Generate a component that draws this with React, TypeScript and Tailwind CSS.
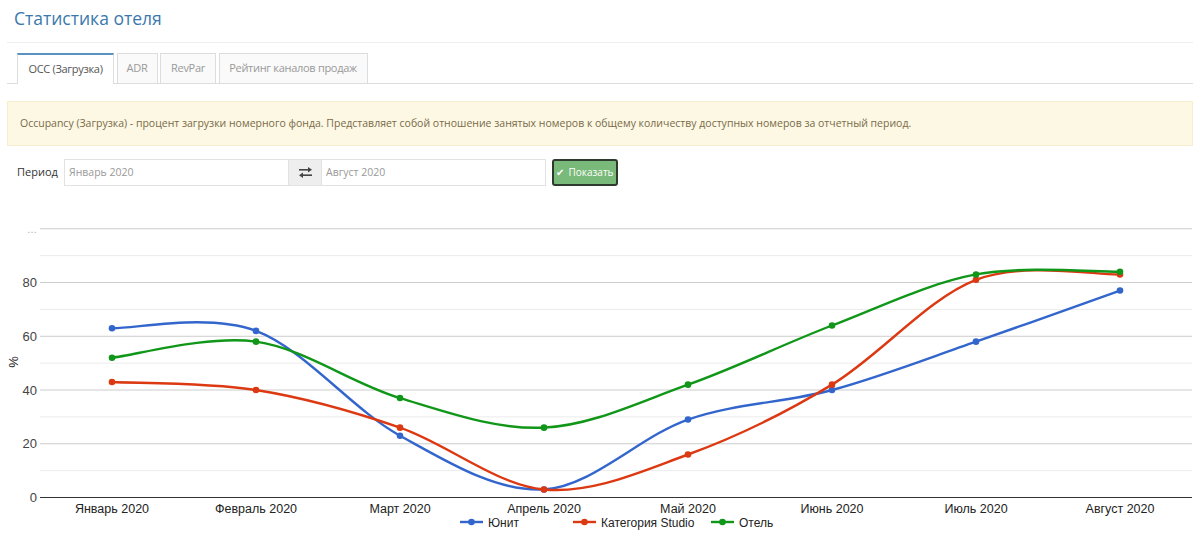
import React from "react";

const MONTHS = [
  "Январь 2020",
  "Февраль 2020",
  "Март 2020",
  "Апрель 2020",
  "Май 2020",
  "Июнь 2020",
  "Июль 2020",
  "Август 2020",
];

const SERIES = [
  { name: "Юнит", color: "#3366cc", data: [63, 62, 23, 3, 29, 40, 58, 77] },
  { name: "Категория Studio", color: "#dc3912", data: [43, 40, 26, 3, 16, 42, 81, 83] },
  { name: "Отель", color: "#109618", data: [52, 58, 37, 26, 42, 64, 83, 84] },
];

const X0 = 40;
const X1 = 1192;
const STEP = 144;
const Y_ZERO = 498.5;
const PX_PER = 2.6875;

const px = (i: number) => X0 + STEP / 2 + i * STEP;
const py = (v: number) => Y_ZERO - v * PX_PER;

// Catmull-Rom -> cubic bezier, same look as google "function" curves
function smoothPath(values: number[]) {
  const pts = values.map((v, i) => [px(i), py(v)]);
  let d = `M${pts[0][0]},${pts[0][1]}`;
  for (let i = 0; i < pts.length - 1; i++) {
    const p0 = pts[i - 1] ?? pts[i];
    const p1 = pts[i];
    const p2 = pts[i + 1];
    const p3 = pts[i + 2] ?? p2;
    const c1x = p1[0] + (p2[0] - p0[0]) / 6;
    const c1y = p1[1] + (p2[1] - p0[1]) / 6;
    const c2x = p2[0] - (p3[0] - p1[0]) / 6;
    const c2y = p2[1] - (p3[1] - p1[1]) / 6;
    d += ` C${c1x},${c1y} ${c2x},${c2y} ${p2[0]},${p2[1]}`;
  }
  return d;
}

function ExchangeIcon() {
  return (
    <svg width="13" height="11" viewBox="0 0 13 11" fill="#444">
      <rect x="0" y="2" width="10" height="1.6" />
      <polygon points="9,0 13,2.8 9,5.6" />
      <rect x="3" y="7.4" width="10" height="1.6" />
      <polygon points="4,5.4 0,8.2 4,11" />
    </svg>
  );
}

function Chart() {
  const gridMajor = [20, 40, 60, 80, 100];
  const gridMinor = [10, 30, 50, 70, 90];
  const legend = [
    { ...SERIES[0], x: 460 },
    { ...SERIES[1], x: 573 },
    { ...SERIES[2], x: 711 },
  ];
  return (
    <svg
      width="1200"
      height="338"
      viewBox="0 200 1200 338"
      className="block"
      style={{ fontFamily: '"Liberation Sans", Arial, sans-serif' }}
    >
      {gridMinor.map((v) => (
        <line key={v} x1={X0} x2={X1} y1={py(v)} y2={py(v)} stroke="#ebebeb" strokeWidth="1" />
      ))}
      {gridMajor.map((v) => (
        <line key={v} x1={X0} x2={X1} y1={py(v)} y2={py(v)} stroke="#cccccc" strokeWidth="1" />
      ))}
      <line x1={X0} x2={X1} y1={Y_ZERO} y2={Y_ZERO} stroke="#333" strokeWidth="1" />

      {[0, 20, 40, 60, 80].map((v) => (
        <text key={v} x="37" y={py(v) + 4.5} textAnchor="end" fontSize="13" fill="#444">
          {v}
        </text>
      ))}
      <text x="37" y={py(100) + 4} textAnchor="end" fontSize="10" fill="#aaa">
        …
      </text>
      <text x="18" y="363" fontSize="13" fill="#222" textAnchor="middle" transform="rotate(-90 18 363)">
        %
      </text>

      {MONTHS.map((m, i) => (
        <text key={m} x={px(i)} y="514" textAnchor="middle" fontSize="12.5" fill="#222">
          {m}
        </text>
      ))}

      {SERIES.map((s) => (
        <g key={s.name}>
          <path d={smoothPath(s.data)} fill="none" stroke={s.color} strokeWidth="2.4" />
          {s.data.map((v, i) => (
            <circle key={i} cx={px(i)} cy={py(v)} r="3.3" fill={s.color} />
          ))}
        </g>
      ))}

      {legend.map((l) => (
        <g key={l.name}>
          <line x1={l.x} x2={l.x + 23} y1="523" y2="523" stroke={l.color} strokeWidth="2.4" />
          <circle cx={l.x + 11.5} cy="523" r="3.3" fill={l.color} />
          <text x={l.x + 28} y="527.5" fontSize="12" fill="#222">
            {l.name}
          </text>
        </g>
      ))}
    </svg>
  );
}

export default function App() {
  const tabs = [
    { label: "ОСС (Загрузка)", w: "w-[97px]" },
    { label: "ADR", w: "w-[41px]" },
    { label: "RevPar", w: "w-[56px]" },
    { label: "Рейтинг каналов продаж", w: "w-[149px]" },
  ];
  return (
    <div
      className="w-[1200px] h-[538px] overflow-hidden bg-white"
      style={{ fontFamily: '"Open Sans", "Noto Sans", sans-serif' }}
    >
      <div className="px-[7px]">
        <div className="h-[43px] border-b border-[#eeeeee] pl-[7px] flex items-center">
          <h1 className="text-[17.5px] text-[#3a78ad] leading-none -mt-[5px]">Статистика отеля</h1>
        </div>

        <div className="mt-[10px] border-b border-[#dddddd] pl-[10px] flex gap-[2.5px] h-[31px]">
          {tabs.map((t, i) =>
            i === 0 ? (
              <div
                key={t.label}
                className={`${t.w} h-[31px] -mb-px flex items-center justify-center bg-white border-x border-[#dddddd] border-t-2 border-t-[#5b92c4] text-[11px] tracking-[-0.3px] text-[#555]`}
              >
                {t.label}
              </div>
            ) : (
              <div
                key={t.label}
                className={`${t.w} h-[30px] flex items-center justify-center bg-[#fafafa] border border-b-0 border-[#dddddd] text-[11px] tracking-[-0.3px] text-[#999]`}
              >
                {t.label}
              </div>
            ),
          )}
        </div>

        <div className="mt-[17px] h-[45px] bg-[#fcf8e3] border border-[#f7edcf] px-[12px] flex items-center text-[10.5px] text-[#7a6a4a]">
          Occupancy (Загрузка) - процент загрузки номерного фонда. Представляет собой отношение занятых номеров к общему количеству доступных номеров за отчетный период.
        </div>

        <div className="mt-[13px] flex items-center h-[27px] pl-[10px]">
          <span className="text-[11px] text-[#333] w-[47px]">Период</span>
          <div className="flex h-[27px]">
            <div className="w-[225px] border border-[#e2e2e2] flex items-center px-[4px] text-[10.5px] text-[#999]">
              Январь 2020
            </div>
            <div className="w-[32px] bg-[#eeeeee] border-y border-[#e2e2e2] flex items-center justify-center">
              <ExchangeIcon />
            </div>
            <div className="w-[225px] border border-[#e2e2e2] flex items-center px-[4px] text-[10.5px] text-[#999]">
              Август 2020
            </div>
          </div>
          <button
            type="button"
            className="ml-[6px] h-[27px] w-[66px] rounded-[3px] bg-[#79b979] border-2 border-[#2f3a2f] text-white text-[10px] flex items-center justify-center gap-[4px]"
          >
            <span className="text-[10px]">✔</span>
            Показать
          </button>
        </div>
      </div>

      <div className="mt-[13px]">
        <Chart />
      </div>
    </div>
  );
}
